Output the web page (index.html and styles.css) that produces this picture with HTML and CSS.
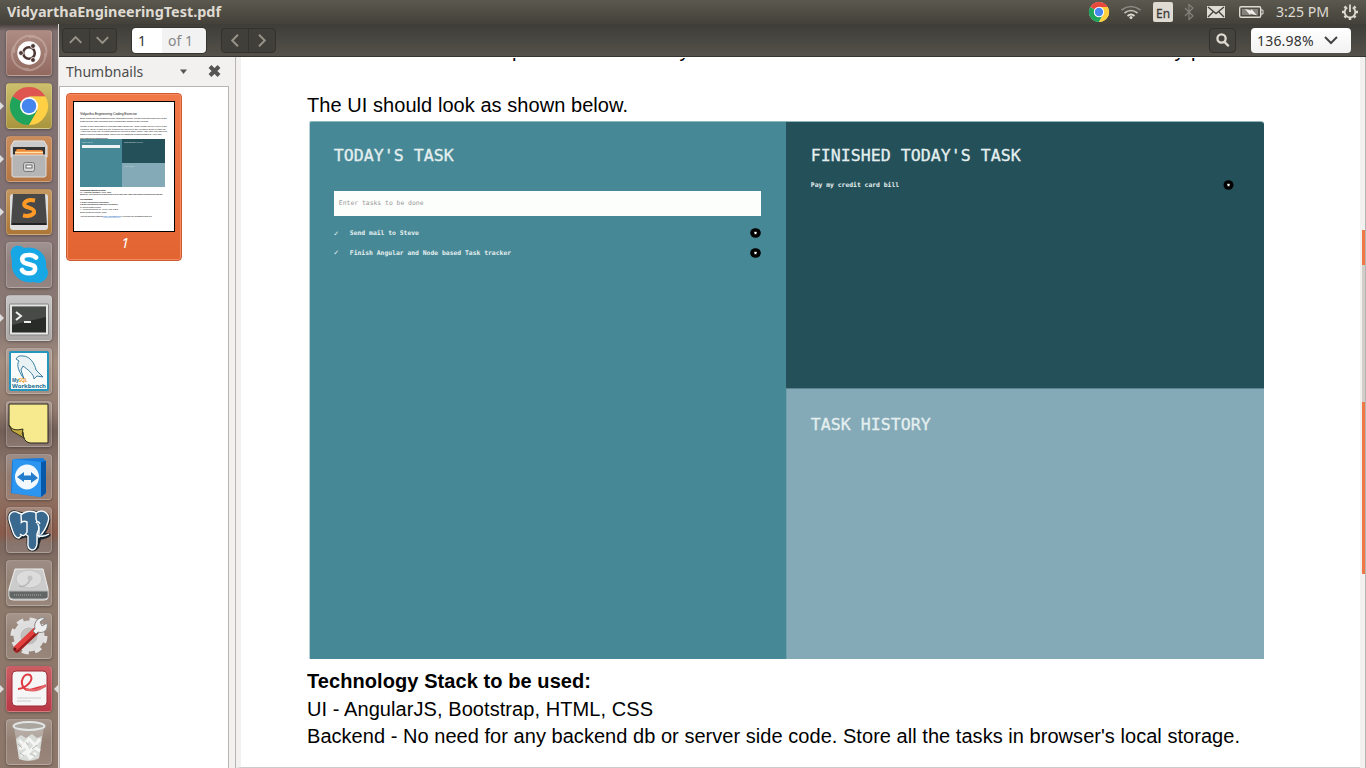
FILE: index.html
```html
<!DOCTYPE html>
<html lang="en">
<head>
<meta charset="utf-8">
<title>VidyarthaEngineeringTest.pdf</title>
<link rel="stylesheet" href="styles.css">
</head>
<body>
<div class="screen">
<header class="topbar">
  <div class="title"><svg width="224" height="24"><text x="7" y="17" textLength="214" lengthAdjust="spacingAndGlyphs">VidyarthaEngineeringTest.pdf</text></svg></div>
  <svg class="tray" width="296" height="24" viewBox="1070 0 296 24">
    <circle cx="1099" cy="12" r="10" fill="#fff"/>
    <path d="M1099 12L1090.3 7A10 10 0 0 1 1107.7 7H1099Z" fill="#e6483b"/>
    <path d="M1090.3 7A10 10 0 0 0 1099 22L1103.3 14.5 1099 12Z" fill="#20a35a"/>
    <path d="M1107.7 7A10 10 0 0 1 1099 22L1103.3 14.5 1099 7Z" fill="#ffcf3e"/>
    <circle cx="1099" cy="12" r="5.2" fill="#fff"/><circle cx="1099" cy="12" r="4.2" fill="#4687f0"/>
    <g fill="none" stroke="#dfdbd2" stroke-width="1.7">
      <path d="M1121.500 10Q1131 3 1140.500 10" stroke="#8b8982"/><path d="M1124.500 13Q1131 8 1137.500 13" stroke="#c5c2b9"/><path d="M1127.500 16Q1131 13 1134.500 16"/>
    </g>
    <circle cx="1131" cy="17.500" r="1.500" fill="#dfdbd2"/>
    <rect x="1153" y="2" width="20" height="20" rx="2" fill="#dfdbd2"/>
    <text x="1156" y="17.500" font-size="13" textLength="14" lengthAdjust="spacingAndGlyphs" fill="#3c3b37" stroke="#3c3b37" stroke-width=".3">En</text>
    <path d="M1185 8L1193 16 1189 19.500V4.500L1193 8 1185 16" fill="none" stroke="#85827b" stroke-width="1.2"/>
    <rect x="1207" y="6" width="18" height="12" fill="#dfdbd2"/>
    <path d="M1208 7L1216 13.500 1224 7M1208 17L1213 12M1224 17L1219 12" fill="none" stroke="#45433e" stroke-width="1.4"/>
    <rect x="1239.700" y="6.700" width="21" height="10.600" rx="1.500" fill="none" stroke="#dfdbd2" stroke-width="1.400"/>
    <rect x="1242" y="9" width="16" height="6" fill="#85827b"/>
    <path d="M1261 10H1263V14H1261" fill="none" stroke="#dfdbd2"/>
    <path d="M1245 9L1251 10.500 1251.500 9 1257 15.500 1250.500 13.500 1250 15Z" fill="#efede7"/>
    <text x="1276" y="17" font-size="14" textLength="53" lengthAdjust="spacingAndGlyphs" fill="#dfdbd2">3:25 PM</text>
    <g stroke="#dfdbd2" fill="none" stroke-width="1.800">
      <path d="M1347.300 7.500A5.300 5.300 0 1 0 1352.700 7.500"/><path d="M1350 4.500V12"/>
      <path d="M1344.500 6.500L1345.800 7.800M1355.500 6.500L1354.200 7.800M1342 12H1344M1358 12H1356M1344.500 17.500L1346 16M1355.500 17.500L1354 16M1350 18V20" stroke-width="2.500"/>
    </g>
  </svg>
</header>
<div class="workspace">
<nav class="launcher">
  <div class="tile ubuntu"><svg viewBox="0 0 46 46"><g fill="none" stroke="#d7c2ba" stroke-width="2" opacity=".45"><path d="M8 23C7 9 22 2 32 8M23 7C38 5 44 20 38 30M39 23C41 36 25 44 15 38M23 39C8 40 3 26 8 16"/></g><circle cx="23" cy="23" r="11.700" fill="#fff"/><circle cx="23" cy="23" r="5.800" fill="none" stroke="#4c3431" stroke-width="2.500"/><g fill="#4c3431" stroke="#fff" stroke-width=".8"><circle cx="15" cy="23" r="2.400"/><circle cx="27" cy="16" r="2.400"/><circle cx="27" cy="30" r="2.400"/></g></svg></div>
  <div class="tile chrome run"><svg viewBox="0 0 46 46"><path d="M23 23L6.500 13.500A19 19 0 0 1 39.500 13.500H23Z" fill="#df5550"/><path d="M6.500 13.500A19 19 0 0 0 23 42L31.200 27.800 23 23Z" fill="#20a35a"/><path d="M39.500 13.500A19 19 0 0 1 23 42L31.200 27.800 31 18 23 13.500Z" fill="#ffd044"/><circle cx="23" cy="23" r="9" fill="#fff"/><circle cx="23" cy="23" r="7.300" fill="#4586ee"/></svg></div>
  <div class="tile files run"><svg viewBox="0 0 46 46"><path d="M8 5H38L41 10V21H5V10Z" fill="#cacaca" stroke="#e3e3e3"/><rect x="7" y="11" width="32" height="11" fill="#333"/><path d="M9 16L11 13H19L20 14H35L37 15V20H9Z" fill="#ed8a3a"/><path d="M9 16.500H37" stroke="#ffe0af" stroke-width="1.500"/><path d="M6 19H40V39Q40 41 38 41H8Q6 41 6 39Z" fill="#b5b5b5" stroke="#dedede"/><rect x="17.500" y="26.500" width="11" height="9" rx="2" fill="#d5d5d5" stroke="#777"/><rect x="20" y="29" width="6" height="3" fill="#fff" stroke="#666"/></svg></div>
  <div class="tile sublime run"><svg viewBox="0 0 46 46"><rect x="4" y="5" width="38" height="36" rx="3" fill="#ddd"/><path d="M7 5H39L41 36H5Z" fill="#484848"/><path d="M6 34H40V36H6Z" fill="#222"/><path d="M29 11.500Q21 10 18.500 14C16 20 30 17 28 24Q25 28 17 26.500" fill="none" stroke="#ff9a27" stroke-width="4"/></svg></div>
  <div class="tile"><svg viewBox="0 0 46 46"><path d="M5 13C3 5 12 1 18 6C30 3 42 12 40 25C46 33 37 44 28 40C15 43 4 32 6 20Z" fill="#18a7e5"/><path d="M30 15.500Q27 12.500 22.500 13C15.500 13 15 18 18 20.500C23 23 30 22 29 27.500C28 33 18 32 16 28" fill="none" stroke="#fff" stroke-width="4.600" stroke-linecap="round"/></svg></div>
  <div class="tile term run"><svg viewBox="0 0 46 46"><rect x="3.500" y="9" width="39" height="31" rx="1" fill="#e5e5e5" stroke="#858585"/><rect x="6" y="11.500" width="34" height="26" fill="#292b29"/><path d="M6 12H40V22L6 30Z" fill="#484a48"/><path d="M10 17L15 21 10 25M18 27H25" fill="none" stroke="#eee" stroke-width="2"/></svg></div>
  <div class="tile"><svg viewBox="0 0 46 46"><rect x="4" y="4" width="38" height="38" rx="1" fill="#fafcfc" stroke="#2495bd" stroke-width="2"/><path d="M18 31C13 24 10 17 13 13L10 11Q12 7 17 8C24 8 29 16 30 22L37 29 31 28 28 31C28 26 21 21 17 18L15 22Z" fill="#e8f2f5" stroke="#267296" stroke-width=".9"/><text x="6" y="34" font-size="4.500" font-weight="bold" fill="#156d91">My<tspan fill="#ee981c">SQL</tspan></text><text x="6" y="39.500" font-size="6" font-weight="bold" textLength="34" lengthAdjust="spacingAndGlyphs" fill="#156d91">Workbench</text></svg></div>
  <div class="tile"><svg viewBox="0 0 46 46"><path d="M3 3H42V42L24 42Q17 41 17 31L6 29 3 24Z" fill="#f7e98e" stroke="#24231d"/><path d="M3 24Q6 31 17 28Q15 33 18 37L6 30Z" fill="#c3a93e" stroke="#35321f"/></svg></div>
  <div class="tile"><svg viewBox="0 0 46 46"><path d="M7 5L37 4 40 7V39L35 43 5 39 6 8Z" fill="#167bdc"/><path d="M7 5L35 8V43L6 39Z" fill="#2c95f0"/><path d="M35 8L40 7V39L35 43Z" fill="#0758a9"/><ellipse cx="21" cy="23" rx="12" ry="12.500" fill="#f2f8fc"/><path d="M11 23L18 18V21.500H25V18L32 24 25 29V26H18V28Z" fill="#237dcc"/></svg></div>
  <div class="tile"><svg viewBox="0 0 46 46"><g fill="#39698f" stroke="#16242e" stroke-width="3" stroke-linejoin="round"><path d="M13 6C5 2 1 8 4 16C7 25 8 31 13 31L22 28V37Q22 43 27 43Q32 42 32 37L34 31Q40 31 43 28L37 27C41 22 47 8 38 6Q34 4 31 6Q23 3 18 7Z"/></g><g fill="#39698f" stroke="#fff" stroke-width="1.400" stroke-linejoin="round"><path d="M13 6C5 2 1 8 4 16C7 25 8 31 13 31L19 25 18 8Z"/><path d="M15 8C20 3 29 3 32 8C35 15 33 23 31 27V37Q30 43 26 43Q21 42 22 35V29L16 25Z"/><path d="M30 6C37 1 45 7 42 15C40 22 36 27 33 30V20L30 12Z"/><path d="M15 16Q17 13 21 15V25Q18 31 14 27M30 16Q32 13 34 17M31 28Q37 31 43 27"/></g></svg></div>
  <div class="tile"><svg viewBox="0 0 46 46"><path d="M9 9H37L42 29V37Q42 40 38 40H7Q3 40 3 36V29Z" fill="#ccc" stroke="#eee"/><ellipse cx="23" cy="19" rx="13" ry="9" fill="#dcdcdc" stroke="#c2c2c2"/><circle cx="24" cy="18" r="2.500" fill="#c2c2c2"/><path d="M13 26Q20 28 24 20" fill="none" stroke="#b5b5b5" stroke-width="1.500"/><path d="M3 31H42V37Q41 39 38 39H7Q4 39 3 36Z" fill="#626665" stroke="#b4b6b5"/><path d="M8 35H35" stroke="#aaa" stroke-dasharray="1 1"/></svg></div>
  <div class="tile"><svg viewBox="0 0 46 46"><circle cx="23" cy="23" r="16" fill="none" stroke="#e2e2e2" stroke-width="5" stroke-dasharray="6.600 5.970"/><circle cx="23" cy="23" r="11.500" fill="none" stroke="#dedede" stroke-width="8"/><circle cx="23" cy="23" r="8" fill="#c4bfbb" stroke="#bbb"/><path d="M11 36L30 18" stroke="#9e2020" stroke-width="7" stroke-linecap="round"/><path d="M10 35L29 17" stroke="#e44040" stroke-width="4.500" stroke-linecap="round"/><path d="M27 18L29 16C27 9 33 3 39 5L34 9 36 13 41 10C43 17 37 21 32 19L30 21Z" fill="#eee" stroke="#888"/><circle cx="9" cy="36" r="1.500" fill="#6b1717"/></svg></div>
  <div class="tile pdf run active"><svg viewBox="0 0 46 46"><rect x="6" y="5" width="35" height="35" rx="4" fill="#f6f6f6" stroke="#a02836"/><path d="M12 23C21 22 29 13 24 9C18 6 13 16 18 22C22 27 30 21 40 20" fill="none" stroke="#df3941" stroke-width="2"/><path d="M20 23Q30 27 40 19" fill="none" stroke="#e3666a" stroke-width="2.500"/><path d="M11 32H35M11 35H25" stroke="#ccc"/></svg></div>
  <div class="tile"><svg viewBox="0 0 46 46"><path d="M8 8L13 40Q23 44 33 40L38 8Z" fill="#d9dcda" opacity=".42"/><path d="M10 20L15 16 20 19 26 15 31 19 36 17 33 39Q23 44 13 40Z" fill="#d8dbd7"/><path d="M13 21L18 26 23 20 29 26 34 20M13 30L20 27 23 33 28 28 34 32M15 37L20 33 24 39 30 34" fill="none" stroke="#f5f6f4" stroke-width="3"/><path d="M12 25L16 29M26 30L31 26M14 34L18 37M25 35L29 37M20 23L22 26" fill="none" stroke="#b2b4ad"/><ellipse cx="23" cy="7" rx="15.500" ry="4" fill="#aaa69f" stroke="#e1e5e4" stroke-width="2"/></svg></div>
</nav>
<main class="viewer">
  <div class="toolbar">
    <div class="buttons updown"><svg viewBox="0 0 54 24"><path d="M6.500 14.500L12.500 8.500 18.500 14.500M34.500 8.500L40.500 14.500 46.500 8.500"/></svg></div>
    <div class="page"><b>1</b><span>of 1</span></div>
    <div class="buttons sideways"><svg viewBox="0 0 54 24"><path d="M16 6L10 12 16 18M38 6L44 12 38 18"/></svg></div>
    <div class="buttons search"><svg viewBox="0 0 26 24"><circle cx="12" cy="10" r="4.300"/><path d="M15 13.500L19.500 18"/></svg></div>
    <div class="zoom"><span>136.98%</span><svg width="14" height="9"><path d="M1 1L7 7 13 1"/></svg></div>
  </div>
  <div class="content">
    <aside class="sidebar">
      <div class="sidehead"><span>Thumbnails</span><svg width="50" height="28"><path d="M7 12.500H14L10.500 17Z" fill="#555"/><path d="M37 9.500L46 18.500M46 9.500L37 18.500" stroke="#555" stroke-width="4"/></svg></div>
      <div class="thumblist">
        <div class="thumb">
          <svg class="sheet" viewBox="0 0 102 131">
            <rect width="102" height="131" fill="#fff"/><rect x=".5" y=".5" width="101" height="130" fill="none" stroke="#000"/>
            <g fill="#222" font-size="2.500">
              <text x="7" y="13.500" font-size="3.500" textLength="57">Vidyartha Engineering Coding Exercise</text>
              <text x="7" y="17.500" textLength="87">Build a todo app as mentioned in the description below. Please read and make sure all the</text>
              <text x="7" y="20.500" textLength="69">features work while preparing and explaining the solution to the exercise.</text>
              <text x="7" y="26" textLength="87">Create a web application to manage tasks. Each day, Today's Task will be in one of the</text>
              <text x="7" y="28.700" textLength="86">columns. Once a task is done it should be moved to the Finished Today's Task list.</text>
              <text x="7" y="31.400" textLength="87">At the end of the day all tasks should be moved to Task History. The user can add new</text>
              <text x="7" y="34.100" textLength="82">tasks or remove finished tasks. There may be additional methods added by your own.</text>
              <text x="7" y="37.500" textLength="28">The UI should look as shown below.</text>
            </g>
            <path d="M7 38H49V86H7Z" fill="#478896"/><path d="M49 38H92V62H49Z" fill="#24505a"/><path d="M49 62H92V86H49Z" fill="#84a9b7"/><path d="M9 44H47V47H9Z" fill="#edf4f3"/>
            <g fill="#bfd6da" font-size="2"><text x="9" y="42" textLength="11">TODAY'S TASK</text><text x="51" y="42" textLength="19">FINISHED TODAY'S TASK</text><text x="51" y="66" textLength="11">TASK HISTORY</text></g>
            <g fill="#222" font-size="2.400">
              <text x="7" y="89.500" font-weight="bold" textLength="26">Technology Stack to be used:</text><text x="7" y="91.800" textLength="31">UI - AngularJS, Bootstrap, HTML, CSS</text><text x="7" y="94" textLength="83">Backend - No need for any backend db or server side code. Store all the tasks in browser's local storage.</text>
              <text x="7" y="98.500" font-weight="bold" textLength="13">Prerequisites:</text><text x="7" y="101.500" textLength="29">1. Basic understanding of Bootstrap</text><text x="7" y="104" textLength="38">2. Basic understanding of Browser local storage</text><text x="7" y="106.500" textLength="21">3. Good design sense</text><text x="7" y="109" textLength="38">4. Understanding of HTML and CSS</text><text x="7" y="112" textLength="27">Extra points for cleaner code.</text><text x="7" y="115.500" textLength="72">You can send the project to <tspan fill="#1766bd" text-decoration="underline">info@vidyartha.com</tspan>. If you have any questions reach out.</text>
            </g>
          </svg>
          <i>1</i>
        </div>
      </div>
    </aside>
    <section class="document">
      <svg class="cut" width="1119" height="5" viewBox="241 58 1119 5"><g font-size="20"><text x="512" y="57">p</text><text x="679.500" y="57">y</text><text x="1174.500" y="57">y</text><text x="1191" y="57">p</text></g></svg>
      <p class="intro"><svg width="340" height="26"><text x="0" y="20" textLength="321">The UI should look as shown below.</text></svg></p>
      <div class="mock">
        <div class="today"><h2>TODAY'S TASK</h2><div class="entry">Enter tasks to be done</div>
          <div class="task"><span class="tick">✓</span><span>Send mail to Steve</span><svg class="remove" viewBox="0 0 11 10"><ellipse cx="5.500" cy="5" rx="5.300" ry="4.800"/><path d="M4.500 4L6.500 6M6.500 4L4.500 6"/></svg></div>
          <div class="task"><span class="tick">✓</span><span>Finish Angular and Node based Task tracker</span><svg class="remove" viewBox="0 0 11 10"><ellipse cx="5.500" cy="5" rx="5.300" ry="4.800"/><path d="M4.500 4L6.500 6M6.500 4L4.500 6"/></svg></div>
        </div>
        <div class="right"><div class="finished"><h2>FINISHED TODAY'S TASK</h2><div class="task"><span>Pay my credit card bill</span><svg class="remove" viewBox="0 0 11 10"><ellipse cx="5.500" cy="5" rx="5" ry="4.800"/><path d="M4.500 4L6.500 6M6.500 4L4.500 6"/></svg></div></div>
        <div class="history"><h2>TASK HISTORY</h2></div></div>
      </div>
      <svg class="stack" width="960" height="100"><text x="0" y="29" font-weight="bold" textLength="284">Technology Stack to be used:</text><text x="0" y="57" textLength="346">UI - AngularJS, Bootstrap, HTML, CSS</text><text x="0" y="84" textLength="933">Backend - No need for any backend db or server side code. Store all the tasks in browser's local storage.</text></svg>
    </section>
    <div class="scroll"><i class="small"></i><i class="long"></i></div>
  </div>
</main>
</div>
</div>
</body>
</html>
```
FILE: styles.css
```css
*{box-sizing:border-box}
body{margin:0;overflow:hidden;font-family:"Noto Sans","Open Sans",sans-serif}
svg{display:block}
.screen{width:1366px;height:768px;display:flex;flex-direction:column;overflow:hidden}
.topbar{height:24px;flex:none;display:flex;justify-content:space-between;background:linear-gradient(#5b584f,#434139)}
.title text{font-size:14px;font-weight:bold;fill:#dfdbd2}
.workspace{display:flex;height:744px}
.launcher{width:59px;flex:none;padding:6px 0 0 6px;display:flex;flex-direction:column;gap:7px;border-right:1px solid #dcd5cf;background:linear-gradient(#423d39 0,#807070 7px,#837273 180px,#8b7973 310px,#a28d7f 338px,#917a6f 386px,#725f57 407px,#887268 440px,#8f7163 470px,#885b4b 510px,#7b675e 520px,#8c786b 560px,#8d776a 100%)}
.tile{position:relative;width:46px;height:46px;flex:none;border-radius:4px;border:1px solid #ffffff30;background:linear-gradient(#ffffff38,#ffffff12 50%,#ffffff1c);box-shadow:0 1px 3px #0005}
.tile svg{width:46px;height:46px;margin:-1px}
.ubuntu{background:linear-gradient(#ae8c83,#92695f)}
.chrome{background:linear-gradient(#cdbf6e,#a9953c)}
.files{background:linear-gradient(#cc8d5d,#b47644)}
.sublime{background:linear-gradient(#c49760,#ac7737)}
.term{background:linear-gradient(#c7c5c5,#aaa6a6)}
.pdf{background:linear-gradient(#cb5d62,#b93846)}
.run::before{content:"";position:absolute;left:-7px;top:18px;border-left:4px solid #ddd;border-top:4px solid transparent;border-bottom:4px solid transparent}
.active::after{content:"";position:absolute;right:-7px;top:18px;border-right:4px solid #ddd;border-top:4px solid transparent;border-bottom:4px solid transparent}
.viewer{width:1307px;display:flex;flex-direction:column}
.toolbar{height:33px;flex:none;display:flex;align-items:center;padding:0 15px 0 3px;background:linear-gradient(#3e3d38,#54514a);border-bottom:1px solid #35342f}
.buttons{width:55px;height:25px;border:1px solid #32312d;border-radius:4px;background:linear-gradient(90deg,transparent 26px,#34332f 26px,#34332f 27px,transparent 27px),#413f3a}
.buttons svg{width:53px;height:23px;fill:none;stroke:#989489;stroke-width:2}
.page{width:74px;height:25px;margin:0 15px;border-radius:4px;background:linear-gradient(90deg,#fff 30px,#f2f2f2 30px);display:flex;align-items:center;font-size:14px;color:#333;padding-left:6px;box-shadow:0 0 0 1px #35342f}
.page b{font-weight:normal;width:30px}
.page span{color:#888}
.search{width:27px;margin-left:auto;background:#45433d}
.search svg{width:25px;height:23px;stroke:#dfdbd2;stroke-width:2.4}
.zoom{width:100px;height:25px;margin-left:15px;padding:0 13px 0 6px;border-radius:4px;background:linear-gradient(#fff,#f2f2f2);display:flex;align-items:center;justify-content:space-between;font-size:14px;color:#333;letter-spacing:.2px}
.zoom svg{fill:none;stroke:#444;stroke-width:2}
.content{display:flex;height:711px}
.sidebar{width:177px;border-right:1px solid #b7b4b2;background:#f2f1f0;display:flex;flex-direction:column}
.sidehead{height:29px;flex:none;display:flex;justify-content:space-between;padding:0 12px 0 7px;font-size:14px;line-height:29px;color:#4c4c4c}
.thumblist{width:170px;flex:1;background:#fff;border:1px solid #b7b4b2;border-bottom:0;padding:6px}
.thumb{width:116px;height:168px;border:1px solid #cf5930;border-radius:4px;background:linear-gradient(#f17849,#e26431);box-shadow:inset 0 0 0 1px #f58b61;display:flex;flex-direction:column;align-items:center;padding-top:7px}
.sheet{width:102px;height:131px;font-family:"Liberation Sans",sans-serif}
.thumb i{color:#fff;font-size:14px;line-height:22px;padding-left:2px}
.document{width:1125px;border-left:5px solid #f2f1f0;background:#fff;border-bottom:1px solid #ccc;padding-top:1px;overflow:hidden;font-family:"Liberation Sans",Arial,sans-serif;color:#000}
.cut{overflow:hidden}
.intro{margin:29px 0 0 66px;height:29px;font-size:20px}
.mock{width:955px;height:538px;margin-left:68px;border-radius:2px 3px 0 0;overflow:hidden;display:flex;border-top:1px solid #8cb7bf;border-left:1px solid #b9d2d7;font-family:"DejaVu Sans Mono",monospace;color:#e5efef}
.today{width:476px;flex:none;background:#478896;padding:0 25px 0 24px}
.mock h2{font-size:16.6px;line-height:20px;font-weight:normal;margin:24px 0 0;white-space:nowrap;-webkit-text-stroke:.3px #e5efef}
.entry{height:25px;margin-top:25px;margin-bottom:7.5px;background:#fcfefc;color:#999;font-size:6.4px;line-height:25px;padding-left:5px}
.task{height:19.500px;display:flex;align-items:center;font-size:6.38px;color:#e6f0f0;font-weight:bold;white-space:nowrap}
.tick{width:16px;font-size:8px}
.remove{width:11px;height:10px;margin-left:auto}
.remove path{stroke:#fff;stroke-width:1.200}
.right{width:478px;flex:none;display:flex;flex-direction:column}
.finished{height:266px;flex:none;background:#24505a;padding:0 30px 0 25px}
.finished .task{margin-top:9px}
.history{flex:1;background:#84a9b7;border-top:1px solid #5b848f;border-left:1px solid #719fab;padding:0 24px}
.history h2{margin-top:26px}
.stack{margin-left:66px;font-size:20px}
.scroll{width:6px;background:#f2f1f0;border-right:1px solid #b7b4b2;padding:173px 0 0 2px}
.scroll i{display:block;background:#f07746}
.small{height:35px}
.long{height:309px;border-top:137px solid #d1cec8}
```
